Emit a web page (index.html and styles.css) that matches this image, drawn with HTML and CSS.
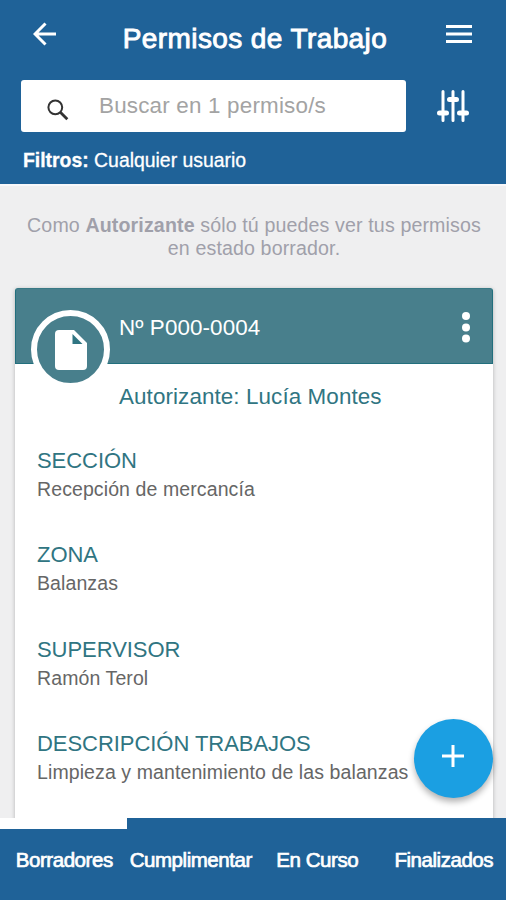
FILE: index.html
```html
<!DOCTYPE html>
<html lang="es">
    <head>
        <title>Permisos de Trabajo</title>
        <meta charset="utf-8" />
        <meta name="viewport" content="width=device-width, initial-scale=1">
        <link rel="stylesheet" href="styles.css">
    </head>
    <body>
        <header class="header">
            <div class="titlebar">
                <svg class="back" width="24" height="24" viewBox="0 0 24 24"><path d="M23 12H2M12.500 1.500L2 12l10.500 10.500" fill="none" stroke="#fff" stroke-width="3"/></svg>
                <h1>Permisos de Trabajo</h1>
                <svg class="menu" width="26" height="18" viewBox="0 0 26 18"><path d="M0 1.500h26M0 9h26M0 16.500h26" stroke="#fff" stroke-width="3"/></svg>
            </div>
            <div class="searchbar">
                <div class="search">
                    <svg width="22" height="22" viewBox="0 0 22 22" fill="none" stroke="#333"><circle cx="8.300" cy="8.300" r="6.900" stroke-width="2"/><path d="M13.300 13.300l7 7" stroke-width="2.800"/></svg>
                    <span>Buscar en 1 permiso/s</span>
                </div>
                <svg class="sliders" width="32" height="32" viewBox="0 0 32 32" stroke="#fff" stroke-linecap="round">
                    <path d="M6 1.500v29M16 1.500v29M26 1.500v29" stroke-width="3"/>
                    <path d="M2.500 23h7M12.500 9.500h7M22.500 23h7" stroke-width="5"/>
                </svg>
            </div>
            <p class="filters"><b>Filtros:</b> Cualquier usuario</p>
        </header>
        <main class="content">
            <p class="hint">Como <b>Autorizante</b> sólo tú puedes ver tus permisos<br>en estado borrador.</p>
            <article class="card">
                <div class="card-header">
                    <div class="badge">
                        <svg width="32" height="40" viewBox="0 0 32 40"><path d="M4 0h15l13 13v23a4 4 0 0 1-4 4H4a4 4 0 0 1-4-4V4a4 4 0 0 1 4-4z" fill="#fff"/><path d="M17.500 4v10H27.500z" fill="#307582"/></svg>
                    </div>
                    <span class="number">Nº P000-0004</span>
                    <svg class="more" width="8" height="32" viewBox="0 0 8 32" fill="#fff"><circle cx="4" cy="4" r="4"/><circle cx="4" cy="15.500" r="4"/><circle cx="4" cy="26.500" r="4"/></svg>
                </div>
                <p class="author">Autorizante: Lucía Montes</p>
                <dl>
                    <dt>SECCIÓN</dt>
                    <dd>Recepción de mercancía</dd>
                    <dt>ZONA</dt>
                    <dd>Balanzas</dd>
                    <dt>SUPERVISOR</dt>
                    <dd>Ramón Terol</dd>
                    <dt>DESCRIPCIÓN TRABAJOS</dt>
                    <dd>Limpieza y mantenimiento de las balanzas</dd>
                </dl>
            </article>
        </main>
        <div class="add">
            <svg width="22" height="22" viewBox="0 0 22 22"><path d="M0 11h22M11 0v22" stroke="#fff" stroke-width="3"/></svg>
        </div>
        <nav class="tabs">
            <a class="tab active">Borradores</a>
            <a class="tab">Cumplimentar</a>
            <a class="tab">En Curso</a>
            <a class="tab">Finalizados</a>
        </nav>
    </body>
</html>
```
FILE: styles.css
```css
* { box-sizing: border-box; }
body {
    margin: 0;
    height: 900px;
    overflow: hidden;
    display: flex;
    flex-direction: column;
    background-color: #efeff0;
    font-family: "Liberation Sans", Arial, sans-serif;
}
h1, p, dl, dd { margin: 0; }
svg { display: block; flex: none; }

/* Blue top area */
.header {
    flex: none;
    height: 186px;
    background-color: #1f6298;
    border-bottom: 2px solid #f8f8fa;
    color: white;
}
.titlebar {
    display: flex;
    justify-content: space-between;
    align-items: flex-start;
    height: 80px;
    padding: 22px 34px 0 33px;
}
.titlebar h1 {
    margin-left: 7px;
    font-size: 28px;
    font-weight: normal;
    line-height: 34px;
    letter-spacing: 0.4px;
    -webkit-text-stroke: 0.9px white;
}
.menu { margin-top: 3px; }
.searchbar {
    display: flex;
    align-items: center;
    height: 52px;
    padding-left: 21px;
}
.search {
    display: flex;
    align-items: center;
    width: 385px;
    height: 52px;
    padding-left: 26px;
    border-radius: 3px;
    background-color: white;
    color: #a3a3a3;
    font-size: 22.4px;
    letter-spacing: 0.2px;
}
.search svg { margin: 8px 30px 0 0; }
.sliders { margin-left: 31px; }
.filters {
    padding: 16px 0 0 23px;
    font-size: 19.4px;
    line-height: 24px;
    -webkit-text-stroke: 0.3px white;
}

.content {
    flex: 1;
    min-height: 0;
    overflow: hidden;
    padding: 0 13px 0 15px;
}
.hint {
    height: 102px;
    padding-top: 28px;
    color: #a0a0aa;
    font-size: 19.6px;
    line-height: 23px;
    letter-spacing: 0.13px;
    text-align: center;
    white-space: nowrap;
}

.card {
    height: 560px;
    border-radius: 3px;
    background-color: white;
    box-shadow: 0 1px 4px rgba(0, 0, 0, 0.25);
}
.card-header {
    display: flex;
    height: 76px;
    padding: 0 22px 0 16px;
    border: 1px solid #226f7d;
    border-top-color: #397985;
    border-radius: 3px 3px 0 0;
    background-color: #487f8c;
    color: white;
}
/* The white ring runs into the white card below */
.badge {
    display: flex;
    flex: none;
    align-items: center;
    justify-content: center;
    width: 79px;
    height: 79px;
    margin: 21px 1px 0 -1px;
    border: 6px solid white;
    border-radius: 50%;
    background-color: #487f8c;
}
.number {
    flex: 1;
    padding: 26px 0 0 8px;
    font-size: 22.4px;
    line-height: 26px;
    letter-spacing: 0.1px;
}
.more { margin-top: 23px; }
.author {
    padding: 20px 0 0 104px;
    color: #307582;
    font-size: 22.4px;
    line-height: 26px;
    letter-spacing: 0.1px;
}
dl { padding: 37px 0 0 22px; }
dt {
    color: #307582;
    font-size: 22px;
    line-height: 28px;
    letter-spacing: -0.05px;
}
dd {
    height: 66.300px;
    color: #666;
    font-size: 19.5px;
    line-height: 28px;
    letter-spacing: 0.1px;
    white-space: nowrap;
}

/* Floating button */
.add {
    position: absolute;
    right: 13px;
    bottom: 102px;
    display: flex;
    align-items: center;
    justify-content: center;
    width: 79px;
    height: 79px;
    padding: 0 2px 6px 0;
    border-radius: 50%;
    background-color: #1b9fe2;
    box-shadow: 0 4px 6px rgba(0, 0, 0, 0.3);
}

.tabs {
    display: flex;
    flex: none;
    height: 82px;
    background-color: #1f6298;
    color: white;
}
.tab {
    width: 25%;
    padding-left: 2px;
    border-top: 11px solid transparent;
    font-size: 20.5px;
    line-height: 61px;
    letter-spacing: -0.45px;
    text-align: center;
    -webkit-text-stroke: 0.7px white;
}
.active { border-top-color: white; }
```
